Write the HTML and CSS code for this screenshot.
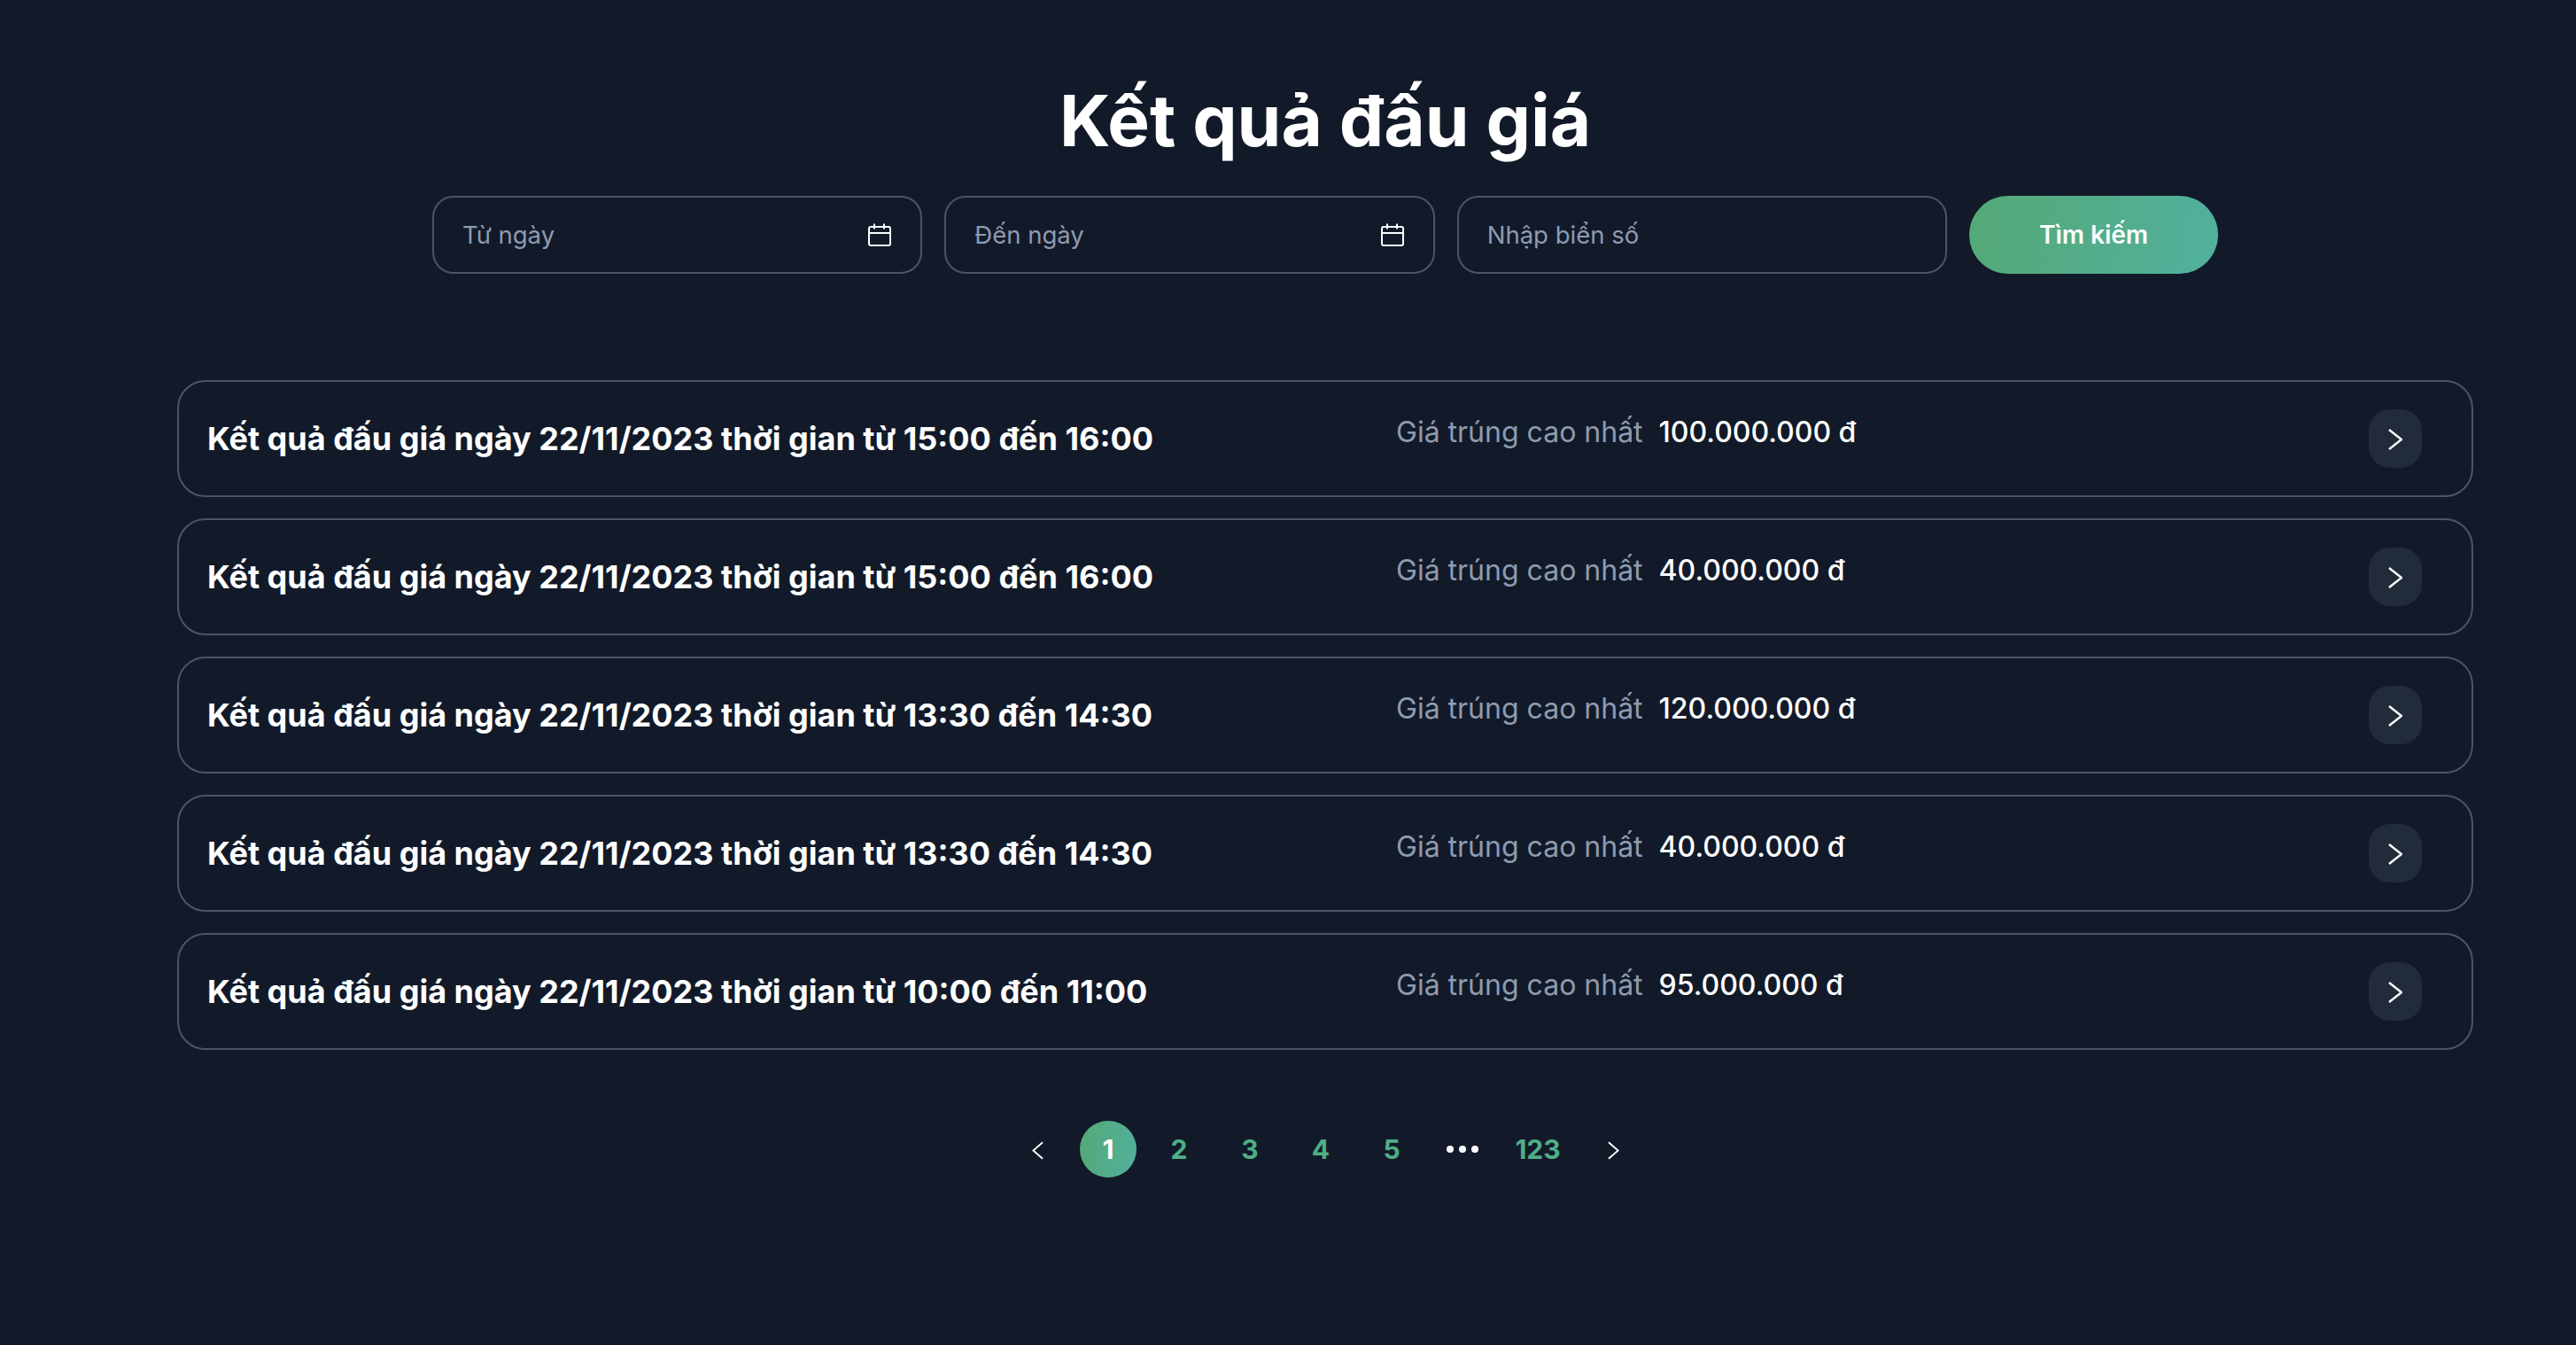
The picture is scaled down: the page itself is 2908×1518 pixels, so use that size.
FILE: index.html
```html
<!DOCTYPE html>
<html lang="vi"><head>
  <meta charset="UTF-8"/>
  <title>Kết quả đấu giá</title>
  <link rel="stylesheet" href="styles.css">
</head><body>
  <div class="container">
    <h1>Kết quả đấu giá</h1>

    <form class="filters">
      <label class="field">
        <input type="text" placeholder="Từ ngày"/>
        <svg class="cal" viewBox="0 0 28 28" fill="none" stroke="currentColor" stroke-width="2"><rect x="2" y="5" width="24" height="21" rx="2"/><path d="M2 12h24M8 1.500v6M19 1.500v6"/></svg>
      </label>
      <label class="field">
        <input type="text" placeholder="Đến ngày"/>
        <svg class="cal" viewBox="0 0 28 28" fill="none" stroke="currentColor" stroke-width="2"><rect x="2" y="5" width="24" height="21" rx="2"/><path d="M2 12h24M8 1.500v6M19 1.500v6"/></svg>
      </label>
      <label class="field">
        <input type="text" placeholder="Nhập biển số"/>
      </label>
      <button type="button" class="search">Tìm kiếm</button>
    </form>

    <div class="results">
      <a class="row">
        <div class="row-title">Kết quả đấu giá ngày 22/11/2023 thời gian từ 15:00 đến 16:00</div>
        <div class="price"><span class="price-label">Giá trúng cao nhất</span><span class="price-value">100.000.000 đ</span></div>
        <span class="row-btn"><svg viewBox="0 0 16 24" fill="none" stroke="currentColor" stroke-width="2.400"><path d="M1 1l14 11L1 23"/></svg></span>
      </a>
      <a class="row">
        <div class="row-title">Kết quả đấu giá ngày 22/11/2023 thời gian từ 15:00 đến 16:00</div>
        <div class="price"><span class="price-label">Giá trúng cao nhất</span><span class="price-value">40.000.000 đ</span></div>
        <span class="row-btn"><svg viewBox="0 0 16 24" fill="none" stroke="currentColor" stroke-width="2.400"><path d="M1 1l14 11L1 23"/></svg></span>
      </a>
      <a class="row">
        <div class="row-title">Kết quả đấu giá ngày 22/11/2023 thời gian từ 13:30 đến 14:30</div>
        <div class="price"><span class="price-label">Giá trúng cao nhất</span><span class="price-value">120.000.000 đ</span></div>
        <span class="row-btn"><svg viewBox="0 0 16 24" fill="none" stroke="currentColor" stroke-width="2.400"><path d="M1 1l14 11L1 23"/></svg></span>
      </a>
      <a class="row">
        <div class="row-title">Kết quả đấu giá ngày 22/11/2023 thời gian từ 13:30 đến 14:30</div>
        <div class="price"><span class="price-label">Giá trúng cao nhất</span><span class="price-value">40.000.000 đ</span></div>
        <span class="row-btn"><svg viewBox="0 0 16 24" fill="none" stroke="currentColor" stroke-width="2.400"><path d="M1 1l14 11L1 23"/></svg></span>
      </a>
      <a class="row">
        <div class="row-title">Kết quả đấu giá ngày 22/11/2023 thời gian từ 10:00 đến 11:00</div>
        <div class="price"><span class="price-label">Giá trúng cao nhất</span><span class="price-value">95.000.000 đ</span></div>
        <span class="row-btn"><svg viewBox="0 0 16 24" fill="none" stroke="currentColor" stroke-width="2.400"><path d="M1 1l14 11L1 23"/></svg></span>
      </a>
    </div>

    <nav class="pager">
      <a class="page arrow"><svg viewBox="0 0 14 22" fill="none" stroke="currentColor" stroke-width="2"><path d="M13 1L1.500 11 13 21"/></svg></a>
      <a class="page active">1</a>
      <a class="page">2</a>
      <a class="page">3</a>
      <a class="page">4</a>
      <a class="page">5</a>
      <span class="page dots"><i></i><i></i><i></i></span>
      <a class="page wide">123</a>
      <a class="page arrow"><svg viewBox="0 0 14 22" fill="none" stroke="currentColor" stroke-width="2"><path d="M1 1l11.500 10L1 21"/></svg></a>
    </nav>
  </div>
</body></html>
```

FILE: styles.css
```css
:root {
  --bg: #121a29;
  --line: #4b5565;
  --muted: #8e9bb0;
  --green: #4fae86;
  --grad: linear-gradient(100deg, #54a976, #52b09e);
}
* {box-sizing:border-box}
body {margin:0;background:var(--bg);color:#fff;font-family:Inter,"Noto Sans",sans-serif}
.container {min-height:1518px;padding:88px 116px 0 200px}
h1 {margin:0;font-size:80px;line-height:96px;font-weight:700;text-align:center}

.filters {display:grid;grid-template-columns:1fr 1fr 1fr 281px;gap:25px;width:2016px;margin:37px auto 0}
.field {display:flex;align-items:center;height:88px;padding:0 32px;border:2px solid var(--line);border-radius:24px}
.field input {flex:1;min-width:0;padding:0;border:0;outline:0;background:none;color:#fff;font:400 27.500px Inter,sans-serif}
.field input::placeholder {color:var(--muted);opacity:1}
.cal {width:28px;height:28px;flex:none}
.search {height:88px;border:0;border-radius:44px;background:var(--grad);color:#fff;font:600 28px Inter,sans-serif}

.results {display:flex;flex-direction:column;gap:24px;margin-top:120px}
.row {display:grid;grid-template-columns:1342px 1fr 60px;align-items:center;height:132px;padding:0 56px 0 32px;border:2px solid var(--line);border-radius:32px}
.row-title {font-size:36px;font-weight:700}
.price {display:flex;gap:18px;align-items:baseline;padding-bottom:15px}
.price-label {font-size:32px;color:var(--muted)}
.price-value {font-size:32px;font-weight:500}
.row-btn {display:flex;align-items:center;justify-content:center;width:60px;height:66px;border-radius:24px;background:#222b3a}
.row-btn svg {width:16px;height:24px;margin-top:2px}

.pager {display:flex;justify-content:center;gap:16px;margin-top:80px}
.page {display:flex;align-items:center;justify-content:center;width:64px;height:64px;border-radius:50%;color:var(--green);font-size:30px;font-weight:700}
.page.active {background:var(--grad);color:#fff}
.page.wide {width:74px}
.arrow {color:#fff}
.arrow svg {width:13px;height:21px;margin-top:2px}
.dots {gap:6px}
.dots i {width:8px;height:8px;border-radius:50%;background:#fff}
```
